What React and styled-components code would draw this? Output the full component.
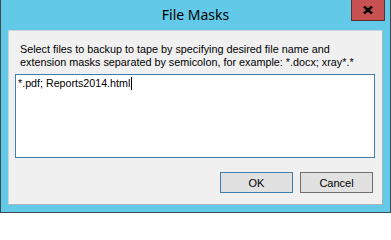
import styled, {createGlobalStyle} from 'styled-components'

const Global = createGlobalStyle`
html, body {
  margin:0;
  padding:0;
  background:#ffffff;
}
`

const Window = styled.div`
width:391px;
height:213px;
box-sizing:border-box;
background-color:#63c9e9;
border:1px solid #3d4a52;
border-top:none;
display:flex;
flex-direction:column;
font-family:"Liberation Sans", Arial, sans-serif;
`

const TitleBar = styled.div`
height:30px;
display:grid;
grid-template-columns:1fr auto 1fr;
align-items:start;
`

const Title = styled.div`
grid-column:2;
font-family:"Noto Sans", "Open Sans", sans-serif;
font-size:14px;
line-height:30px;
color:#000;
`

const CloseButton = styled.div`
grid-column:3;
justify-self:end;
margin-right:5px;
width:34px;
height:21px;
box-sizing:border-box;
background-color:#c75050;
border:1px solid #5f2f2b;
border-top:none;
display:flex;
align-items:center;
justify-content:center;
`

const Client = styled.div`
flex:1;
margin:0 7px 7px 7px;
background-color:#f0f0f0;
border:1px solid;
border-color:#c8d4da #a8b4ba #a8b4ba #c8d4da;
padding:12px 7px 0 6px;
display:flex;
flex-direction:column;
`

const Label = styled.div`
margin-left:5px;
font-size:10.8px;
line-height:13px;
color:#000;
`

const TextBox = styled.div`
margin-top:5px;
height:84px;
box-sizing:border-box;
background:#fff;
border:1px solid #3c7fb1;
padding:2px 2px;
font-size:10.7px;
line-height:13px;
color:#000;
display:flex;
align-items:flex-start;
`

const Caret = styled.span`
display:inline-block;
width:1px;
height:13px;
background:#000;
margin-left:1px;
`

const ButtonRow = styled.div`
margin-top:14px;
display:flex;
justify-content:flex-end;
gap:7px;
padding-right:2px;
`

const Button = styled.div`
width:73px;
height:21px;
box-sizing:border-box;
background-color:#e1e1e1;
border:1px solid ${({primary}) => (primary ? '#3c7fb1' : '#707070')};
font-size:11px;
display:flex;
align-items:center;
justify-content:center;
color:#000;
`

export default function App(){
    return(
        <>
            <Global/>
            <Window>
                <TitleBar>
                    <Title>File Masks</Title>
                    <CloseButton>
                        <svg width="10" height="8" viewBox="0 0 10 8">
                            <path d="M1 0.5 L9 7.5 M9 0.5 L1 7.5" stroke="#000" strokeWidth="2.4"/>
                        </svg>
                    </CloseButton>
                </TitleBar>
                <Client>
                    <Label>
                        Select files to backup to tape by specifying desired file name and<br/>
                        extension masks separated by semicolon, for example: *.docx; xray*.*
                    </Label>
                    <TextBox>
                        *.pdf; Reports2014.html<Caret/>
                    </TextBox>
                    <ButtonRow>
                        <Button primary>OK</Button>
                        <Button>Cancel</Button>
                    </ButtonRow>
                </Client>
            </Window>
        </>
    )
}
